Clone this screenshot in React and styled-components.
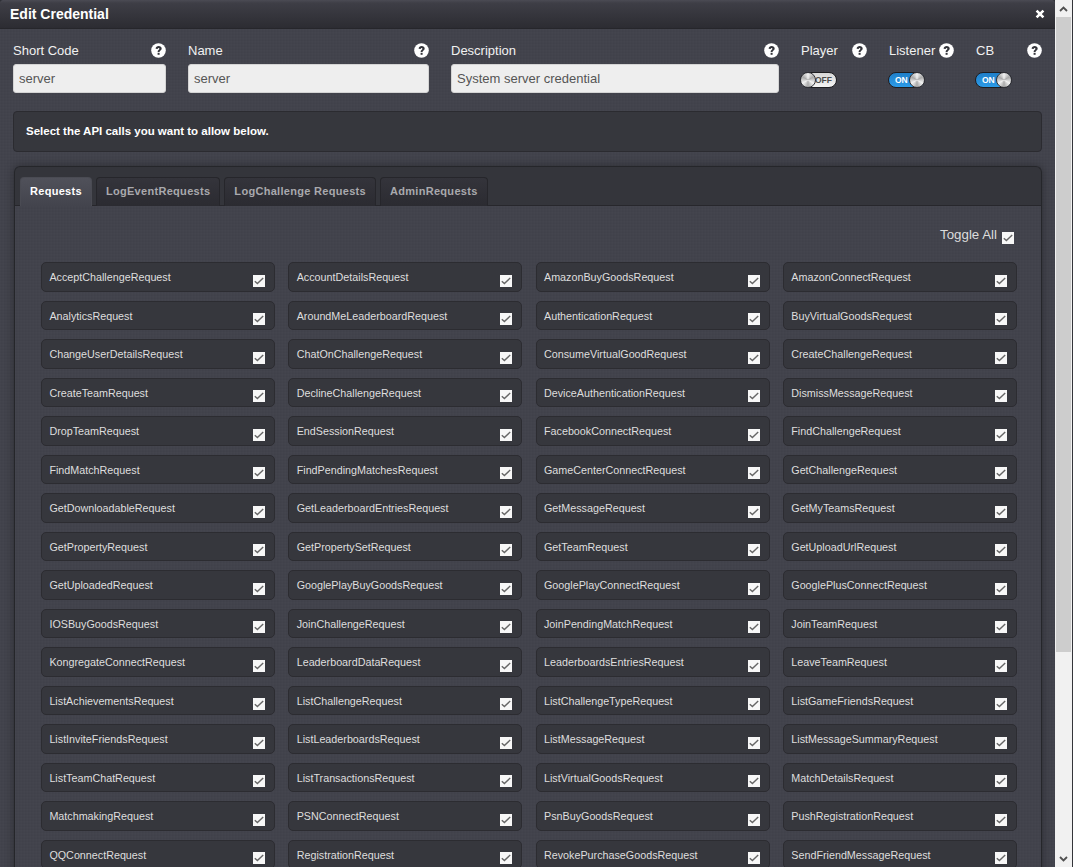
import React from "react";
import styled, { createGlobalStyle } from "styled-components";

const requestNames = [
  "AcceptChallengeRequest", "AccountDetailsRequest", "AmazonBuyGoodsRequest", "AmazonConnectRequest",
  "AnalyticsRequest", "AroundMeLeaderboardRequest", "AuthenticationRequest", "BuyVirtualGoodsRequest",
  "ChangeUserDetailsRequest", "ChatOnChallengeRequest", "ConsumeVirtualGoodRequest", "CreateChallengeRequest",
  "CreateTeamRequest", "DeclineChallengeRequest", "DeviceAuthenticationRequest", "DismissMessageRequest",
  "DropTeamRequest", "EndSessionRequest", "FacebookConnectRequest", "FindChallengeRequest",
  "FindMatchRequest", "FindPendingMatchesRequest", "GameCenterConnectRequest", "GetChallengeRequest",
  "GetDownloadableRequest", "GetLeaderboardEntriesRequest", "GetMessageRequest", "GetMyTeamsRequest",
  "GetPropertyRequest", "GetPropertySetRequest", "GetTeamRequest", "GetUploadUrlRequest",
  "GetUploadedRequest", "GooglePlayBuyGoodsRequest", "GooglePlayConnectRequest", "GooglePlusConnectRequest",
  "IOSBuyGoodsRequest", "JoinChallengeRequest", "JoinPendingMatchRequest", "JoinTeamRequest",
  "KongregateConnectRequest", "LeaderboardDataRequest", "LeaderboardsEntriesRequest", "LeaveTeamRequest",
  "ListAchievementsRequest", "ListChallengeRequest", "ListChallengeTypeRequest", "ListGameFriendsRequest",
  "ListInviteFriendsRequest", "ListLeaderboardsRequest", "ListMessageRequest", "ListMessageSummaryRequest",
  "ListTeamChatRequest", "ListTransactionsRequest", "ListVirtualGoodsRequest", "MatchDetailsRequest",
  "MatchmakingRequest", "PSNConnectRequest", "PsnBuyGoodsRequest", "PushRegistrationRequest",
  "QQConnectRequest", "RegistrationRequest", "RevokePurchaseGoodsRequest", "SendFriendMessageRequest",
];

const tabs = ["Requests", "LogEventRequests", "LogChallenge Requests", "AdminRequests"];

const linen = `
  repeating-linear-gradient(90deg, rgba(255,255,255,0.008) 0 1px, rgba(0,0,0,0.014) 1px 2px, transparent 2px 3px),
  repeating-linear-gradient(0deg, rgba(255,255,255,0.008) 0 1px, rgba(0,0,0,0.014) 1px 2px, transparent 2px 3px)
`;

const GlobalStyle = createGlobalStyle`
  html, body {
    margin: 0;
    height: 867px;
    overflow: hidden;
    background: #2f3036;
  }
  * { box-sizing: border-box; }
`;

const Page = styled.div`
  display: flex;
  height: 867px;
  font-family: "Liberation Sans", Arial, sans-serif;
`;

const Modal = styled.div`
  width: 1055px;
  height: 867px;
  overflow: hidden;
  background-color: #42434c;
  background-image: ${linen};
  border-radius: 4px 4px 0 0;
`;

const TitleBar = styled.div`
  height: 29px;
  display: flex;
  align-items: center;
  justify-content: space-between;
  padding: 0 10px 1px 10px;
  background: linear-gradient(#4b4b54 0, #3e3e46 3px, #2c2c32 100%);
  border-bottom: 1px solid #26262b;
  color: #fff;
  font-size: 14px;
  font-weight: 700;
`;

const Content = styled.div`
  padding: 0 13px;
`;

const FieldRow = styled.div`
  display: grid;
  grid-template-columns: 153px 241px 328px 66px 65px 66px;
  column-gap: 22px;
  padding-top: 13px;
  height: 66px;
`;

const Field = styled.div`
  display: flex;
  flex-direction: column;
`;

const LabelRow = styled.div`
  display: flex;
  justify-content: space-between;
  align-items: center;
  height: 16px;
  margin-bottom: 6px;
  color: #f1f1f1;
  font-size: 13px;
`;

const TextBox = styled.div`
  height: 29px;
  display: flex;
  align-items: center;
  padding: 0 5px;
  background: #eeeeee;
  border: 1px solid #d4d4d4;
  border-radius: 3px;
  color: #555555;
  font-size: 13px;
`;

const MessageBar = styled.div`
  height: 41px;
  margin-top: 16px;
  display: flex;
  align-items: center;
  padding: 0 12px 2px;
  background: #36373d;
  border: 1px solid #2b2b30;
  border-radius: 4px;
  color: #fff;
  font-size: 11.5px;
  font-weight: 700;
`;

const Panel = styled.div`
  margin-top: 14px;
  margin-left: 1px;
  height: 720px;
  padding-top: 10px;
  background: linear-gradient(#34353b 0, #34353b 39px, transparent 39px);
  border: 1px solid #25262a;
  border-bottom: 0;
  border-radius: 6px 6px 0 0;
  box-shadow: 0 0 10px rgba(0, 0, 0, 0.35);
`;

const TabRow = styled.div`
  display: flex;
  gap: 4px;
  height: 29px;
  padding-left: 5px;
  border-bottom: 1px solid #27272c;
`;

const Tab = styled.div`
  height: 29px;
  display: flex;
  align-items: center;
  padding: 0 9px 3px;
  border: 1px solid ${(p) => (p.$active ? "#4a4b53" : "#26262b")};
  border-bottom: 0;
  border-radius: 4px 4px 0 0;
  background: ${(p) =>
    p.$active ? "linear-gradient(#50515a, #43444d)" : "linear-gradient(#34343b, #2b2b31)"};
  color: ${(p) => (p.$active ? "#ffffff" : "#a9a9ad")};
  font-size: 11px;
  font-weight: 700;
  letter-spacing: 0.3px;
  position: relative;
  z-index: 1;
`;

const TabBody = styled.div`
  padding: 0 24px 0 26px;
`;

const ToggleAll = styled.div`
  height: 56px;
  display: flex;
  justify-content: flex-end;
  align-items: flex-start;
  gap: 5px;
  padding-top: 21px;
  padding-right: 3px;
  color: #dcdcdc;
  font-size: 13.3px;
`;

const RequestGrid = styled.div`
  display: grid;
  grid-template-columns: repeat(4, 234px);
  column-gap: 13.3px;
  grid-auto-rows: 29.5px;
  row-gap: 9px;
`;

const RequestCard = styled.div`
  position: relative;
  display: flex;
  align-items: center;
  padding: 1px 0 0 7.4px;
  background: #36373d;
  border: 1px solid #2c2c31;
  border-radius: 5px;
  color: #dedede;
  font-size: 10.75px;
`;

const CheckBox = styled.span`
  display: inline-flex;
  align-items: center;
  justify-content: center;
  width: 12px;
  height: 12px;
  background: #f7f7f7;
  flex: none;
`;

const CardCheck = styled(CheckBox)`
  position: absolute;
  right: 9px;
  top: 11.6px;
`;

const ToggleCheck = styled(CheckBox)`
  margin-top: 5px;
`;

const Switch = styled.div`
  position: relative;
  width: 37px;
  height: 16px;
  margin: 8px 0 0 -1px;
  border-radius: 8px;
  border: 1px solid #1e1e22;
  background: ${(p) =>
    p.$on ? "linear-gradient(#1f7fc9, #2c9be8)" : "linear-gradient(#d8d8d8, #f4f4f4)"};
  color: ${(p) => (p.$on ? "#fff" : "#4c4c4c")};
  font-size: 8.5px;
  font-weight: 700;
  line-height: 14px;
  text-align: ${(p) => (p.$on ? "left" : "right")};
  padding: ${(p) => (p.$on ? "0 0 0 6px" : "0 4px 0 0")};
`;

const Knob = styled.span`
  position: absolute;
  top: -1px;
  ${(p) => (p.$on ? "right: -1px;" : "left: -1px;")}
  width: 16px;
  height: 16px;
  border-radius: 50%;
  border: 1px solid #33343a;
  background: conic-gradient(#f2f2f2, #a9a9a9, #f2f2f2, #a9a9a9, #f2f2f2, #a9a9a9, #f2f2f2);
`;

const ScrollBar = styled.div`
  width: 18px;
  height: 867px;
  display: flex;
  flex-direction: column;
  padding: 0 1px;
  background: #f1f1f1;
  border-right: 1px solid #34353a;
`;

const ScrollButton = styled.div`
  height: 17px;
  display: flex;
  align-items: center;
  justify-content: center;
`;

const ScrollThumb = styled.div`
  height: 635px;
  background: #cdcdcd;
`;

const ScrollTrack = styled.div`
  flex: 1;
`;

function HelpIcon() {
  return (
    <svg width="15" height="15" viewBox="0 0 15 15">
      <circle cx="7.5" cy="7.5" r="7.3" fill="#fff" />
      <path d="M4.6 5.7C4.8 4 6 3 7.7 3C9.4 3 10.7 4 10.7 5.5C10.7 7.5 8.6 7.4 8.6 9H6.6C6.6 6.7 8.4 6.8 8.4 5.7C8.4 5.1 8.1 4.9 7.6 4.9C7.1 4.9 6.8 5.3 6.7 5.9Z" fill="#33343a" />
      <rect x="6.6" y="9.8" width="2" height="2" fill="#33343a" />
    </svg>
  );
}

function CloseIcon() {
  return (
    <svg width="10" height="10" viewBox="0 0 10 10">
      <path d="M1.6 1.6L8.4 8.4M8.4 1.6L1.6 8.4" stroke="#fff" strokeWidth="2.6" />
    </svg>
  );
}

function CheckMark() {
  return (
    <svg width="10" height="8" viewBox="0 0 10 8">
      <path d="M0.8 4.2L3.4 6.6L9.2 1" fill="none" stroke="#666" strokeWidth="1.4" />
    </svg>
  );
}

function Chevron({ down }) {
  return (
    <svg width="9" height="6" viewBox="0 0 9 6">
      <path d={down ? "M1 1L4.5 4.5L8 1" : "M1 5L4.5 1.5L8 5"} fill="none" stroke="#505050" strokeWidth="1.8" />
    </svg>
  );
}

function TextField({ label, value }) {
  return (
    <Field>
      <LabelRow>
        {label}
        <HelpIcon />
      </LabelRow>
      <TextBox>{value}</TextBox>
    </Field>
  );
}

function SwitchField({ label, on }) {
  return (
    <Field>
      <LabelRow>
        {label}
        <HelpIcon />
      </LabelRow>
      <Switch $on={on}>
        {on ? "ON" : "OFF"}
        <Knob $on={on} />
      </Switch>
    </Field>
  );
}

export default function App() {
  return (
    <Page>
      <GlobalStyle />
      <Modal>
        <TitleBar>
          Edit Credential
          <CloseIcon />
        </TitleBar>
        <Content>
          <FieldRow>
            <TextField label="Short Code" value="server" />
            <TextField label="Name" value="server" />
            <TextField label="Description" value="System server credential" />
            <SwitchField label="Player" />
            <SwitchField label="Listener" on />
            <SwitchField label="CB" on />
          </FieldRow>
          <MessageBar>Select the API calls you want to allow below.</MessageBar>
          <Panel>
            <TabRow>
              {tabs.map((tab, i) => (
                <Tab key={tab} $active={i === 0}>{tab}</Tab>
              ))}
            </TabRow>
            <TabBody>
              <ToggleAll>
                Toggle All
                <ToggleCheck><CheckMark /></ToggleCheck>
              </ToggleAll>
              <RequestGrid>
                {requestNames.map((name) => (
                  <RequestCard key={name}>
                    {name}
                    <CardCheck><CheckMark /></CardCheck>
                  </RequestCard>
                ))}
              </RequestGrid>
            </TabBody>
          </Panel>
        </Content>
      </Modal>
      <ScrollBar>
        <ScrollButton><Chevron /></ScrollButton>
        <ScrollThumb />
        <ScrollTrack />
        <ScrollButton><Chevron down /></ScrollButton>
      </ScrollBar>
    </Page>
  );
}
